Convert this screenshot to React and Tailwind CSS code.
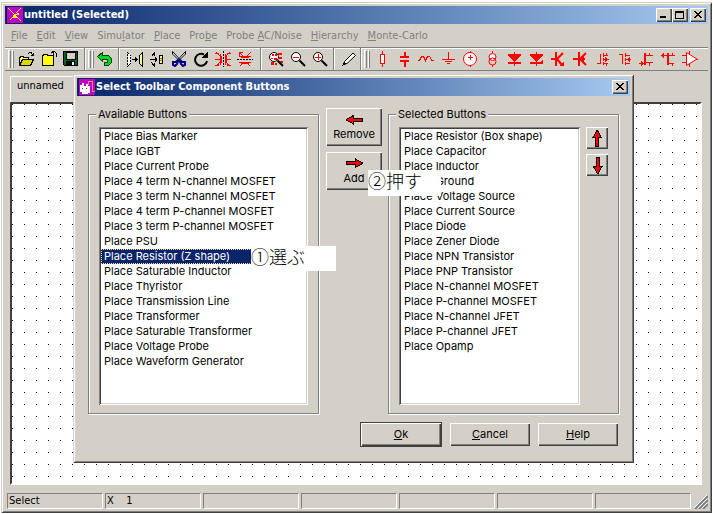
import { clsx } from 'clsx'
import { useState } from 'react'

const raised =
  'bg-[#d4d0c8] shadow-[inset_1px_1px_#ffffff,inset_-1px_-1px_#404040,inset_-2px_-2px_#808080]'
const frame =
  'bg-[#d4d0c8] shadow-[inset_1px_1px_#d4d0c8,inset_-1px_-1px_#404040,inset_2px_2px_#ffffff,inset_-2px_-2px_#808080]'
const titleBar =
  'flex h-[18px] items-center bg-linear-to-r from-[#0a246a] to-[#a6caf0] pr-[2px] text-white'

const menus = [
  ['', 'F', 'ile'],
  ['', 'E', 'dit'],
  ['', 'V', 'iew'],
  ['Simu', 'l', 'ator'],
  ['', 'P', 'lace'],
  ['Pro', 'b', 'e'],
  ['Probe ', 'A', 'C/Noise'],
  ['', 'H', 'ierarchy'],
  ['', 'M', 'onte-Carlo'],
]

const available = [
  'Place Bias Marker',
  'Place IGBT',
  'Place Current Probe',
  'Place 4 term N-channel MOSFET',
  'Place 3 term N-channel MOSFET',
  'Place 4 term P-channel MOSFET',
  'Place 3 term P-channel MOSFET',
  'Place PSU',
  'Place Resistor (Z shape)',
  'Place Saturable Inductor',
  'Place Thyristor',
  'Place Transmission Line',
  'Place Transformer',
  'Place Saturable Transformer',
  'Place Voltage Probe',
  'Place Waveform Generator',
]

const chosen = [
  'Place Resistor (Box shape)',
  'Place Capacitor',
  'Place Inductor',
  'Place Ground',
  'Place Voltage Source',
  'Place Current Source',
  'Place Diode',
  'Place Zener Diode',
  'Place NPN Transistor',
  'Place PNP Transistor',
  'Place N-channel MOSFET',
  'Place P-channel MOSFET',
  'Place N-channel JFET',
  'Place P-channel JFET',
  'Place Opamp',
]

const fileTools = [
  {
    label: 'Open',
    art: (
      <>
        <path d="M0.5 14V6.5H1.5V5.5H4.5V6.5H9.500V8" fill="#ffff80" stroke="#000" />
        <path d="M0.5 14.5L3.5 8.5H14.5L11.5 14.5Z" fill="#d8d800" stroke="#000" />
        <path d="M8.5 3.5L10.5 1.5H12.5L13.5 4.5M11.5 4.5H14.5V2" fill="none" stroke="#000" />
      </>
    ),
  },
  {
    label: 'Close',
    art: (
      <>
        <path d="M1.5 14.5V4.5H2.5V3.5H6.5V4.5H12.5V14.5Z" fill="#ffff00" stroke="#000" />
        <path d="M15.5 5.5V2.5L13.5 0.5H10.5M12.5 0V3.5M10 1.5H12" fill="none" stroke="#000" />
      </>
    ),
  },
  {
    label: 'Save',
    art: (
      <>
        <path d="M0.5 0.5H14.5V14.5H1.5L0.5 13.5Z" fill="#006020" stroke="#000" />
        <path d="M3 1H12V8H3Z" fill="#d4d0c8" stroke="#000" />
        <path d="M3 10H12V14H3Z" fill="#000" />
        <path d="M9 11H11V14H9Z" fill="#fff" />
      </>
    ),
  },
]

const undoTools = [
  {
    label: 'Undo',
    art: (
      <path
        d="M0.5 5.5L5.5 1.5V4.5H11.5L14.5 7.5V11.5L11.5 14.5H7.5V11.5H10.5V8.5H5.5V10.5Z"
        fill="#00d820"
        stroke="#004000"
      />
    ),
  },
]

const editTools = [
  {
    label: 'Mirror',
    art: (
      <>
        <path d="M0.5 1.5L3.5 4.5V12.5L0.5 15.5Z" fill="#fff" stroke="#000" strokeDasharray="2 1" />
        <path d="M15.5 1.5L12.5 4.5V12.5L15.5 15.5Z" fill="#ffff90" stroke="#000" />
        <path d="M5 8.5H11M8.5 6V11M9.5 7V10" stroke="#000" />
      </>
    ),
  },
  {
    label: 'Resize',
    art: (
      <>
        <path d="M2.5 5.5L5.5 1.5V5M2.5 11.5L5.5 15.5V12M1 8.5H8M6.5 6V11M7.5 7V10" fill="none" stroke="#000" />
        <path d="M10.5 4.5H13.5V12.5H10.5Z" fill="#ffff90" stroke="#000" />
        <path d="M11 7.5H13M11 9.5H13" stroke="#808000" />
      </>
    ),
  },
  {
    label: 'Cut',
    art: (
      <>
        <path d="M1.5 0.5V3L8 9.5L14.5 3V0.5L8 7.5Z" fill="#fff" stroke="#000" shapeRendering="auto" />
        <g fill="#d4d0c8" stroke="#000080" strokeWidth="2" shapeRendering="auto">
          <path d="M8 8L5 11H2V14L4 15L6 13ZM8 8L11 11H14V14L12 15L10 13Z" />
        </g>
      </>
    ),
  },
  {
    label: 'Rotate',
    art: (
      <>
        <path d="M11 3.5A6 6 0 1 0 14 10" fill="none" stroke="#000" strokeWidth="2" shapeRendering="auto" />
        <path d="M9 6.5H15V1Z" fill="#000" />
      </>
    ),
  },
  {
    label: 'Flip horizontal',
    art: (
      <>
        <path d="M1.5 1.5L5 5V11L1.5 15.5M5.5 3V14M6 5V12M14.5 1.5L11 5V11L14.5 15.5M10.5 3V14M0 8.5H6M10 8.5H16M0 2.5H4M12 2.5H16M0 14.5H4M12 14.5H16" fill="none" stroke="#ff0000" />
        <path d="M8.5 0V16" stroke="#000" strokeDasharray="2 1" />
      </>
    ),
  },
  {
    label: 'Flip vertical',
    art: (
      <>
        <path d="M2 5.5H14M4 6H12M2.5 1.5L6.5 5.5M2.5 5V1.5H6M13.5 1.5L9.5 5.5M2 11H14M4 12H12M2.5 15.5L6.5 11.5M13.5 15.5L9.5 11.5" fill="none" stroke="#ff0000" />
        <path d="M0 8.5H16" stroke="#000" strokeDasharray="2 1" />
      </>
    ),
  },
]

function Lens({ children }) {
  return (
    <>
      <circle cx="6" cy="6" r="4.5" fill="#fff" stroke="#000" shapeRendering="auto" />
      <path d="M9.5 9.5L15 15" stroke="#000" strokeWidth="2" shapeRendering="auto" />
      {children}
    </>
  )
}

const zoomTools = [
  {
    label: 'Zoom box',
    art: (
      <>
        <path d="M10 2H14V4H10ZM11 6H14V8H11ZM12 10H15V12H12ZM3 11H6V14H3ZM7 12H9V14H7Z" fill="#ff0000" />
        <Lens>
          <path d="M4 3H6V5H4ZM7 3H9V5H7ZM3 7H5V8H3ZM6 7H9V9H6Z" fill="#ff0000" />
        </Lens>
      </>
    ),
  },
  { label: 'Zoom out', art: <Lens><path d="M3 6.5H9" stroke="#ff0000" /></Lens> },
  { label: 'Zoom in', art: <Lens><path d="M3 6.5H9M6.5 3V9" stroke="#ff0000" /></Lens> },
]

const drawTools = [
  {
    label: 'Wire',
    art: (
      <>
        <path d="M2.5 13.5L3.5 10.5L12 2L14.5 4.5L6 12.5Z" fill="#fff" stroke="#000" shapeRendering="auto" />
        <path d="M1 15L3 11L5 13Z" fill="#000" />
      </>
    ),
  },
]

// schematic symbols, all drawn with the same red pen
const partTools = [
  { label: 'Resistor', art: <path d="M8.5 0V4M8.5 13V16M6.5 3.5H10.5V12.5H6.5Z" fill="#fff" /> },
  { label: 'Capacitor', art: <path d="M8.5 1V6M8.5 10V16M4 6H13M4 10H13" strokeWidth="2" /> },
  { label: 'Inductor', art: <path d="M0 9.5H1.5L3.5 5.5L5.5 5.5L7.5 9.5L9.5 5.5H11.5L14 9.5H16" /> },
  { label: 'Ground', art: <path d="M8.5 1V8M2 8.5H15M5 10.5H12M7 12.5H10" /> },
  {
    label: 'Voltage source',
    art: (
      <>
        <circle cx="8" cy="8" r="6.5" fill="#fff" shapeRendering="auto" />
        <path d="M8.5 0V2M8.5 14V16M6 6.5H11M8.5 4V9" />
      </>
    ),
  },
  {
    label: 'Current source',
    art: (
      <>
        <path d="M8.5 0V2M8.5 14V16" />
        <circle cx="8.5" cy="6" r="3.5" fill="#fff" shapeRendering="auto" />
        <circle cx="8.5" cy="10.5" r="3.5" shapeRendering="auto" />
      </>
    ),
  },
  {
    label: 'Diode',
    art: (
      <>
        <path d="M2 4H15L8.5 11Z" fill="#ff0000" stroke="none" />
        <path d="M8.5 1V15M2 3.5H15" />
        <path d="M2 12H15" strokeWidth="2" />
      </>
    ),
  },
  {
    label: 'Zener diode',
    art: (
      <>
        <path d="M2 4H15L8.5 11Z" fill="#ff0000" stroke="none" />
        <path d="M8.5 1V15M2 3.5H15M14.5 9V12M13.5 10V12" />
        <path d="M2 12H15" strokeWidth="2" />
      </>
    ),
  },
  {
    label: 'NPN transistor',
    art: (
      <>
        <path d="M6 1V15M1 8H6" strokeWidth="2" />
        <path d="M7 8L13 2M7 8L12 14" strokeWidth="2" shapeRendering="auto" />
        <path d="M9 15H14V10Z" fill="#ff0000" stroke="none" />
      </>
    ),
  },
  {
    label: 'PNP transistor',
    art: (
      <>
        <path d="M7 1V15M1 8H13" strokeWidth="2" />
        <path d="M8 8L14 2M8 8L14 14" strokeWidth="2" shapeRendering="auto" />
        <path d="M8 8L12 5V11Z" fill="#ff0000" stroke="none" />
      </>
    ),
  },
  {
    label: 'N-channel MOSFET',
    art: <path d="M3 12.5H6.5V3M9.5 2V6M9.5 7V10M9.5 11V14M9 4.5H14M9 12.5H14M9 8.5H15M11.5 6V11M12.5 7V10M12.5 2V5M12.5 12V15" />,
  },
  {
    label: 'P-channel MOSFET',
    art: <path d="M3 3.5H6.5V13M9.5 2V6M9.5 7V10M9.5 11V14M9 4.5H14M9 12.5H14M9 8.5H15M13.5 6V11M12.5 7V10" />,
  },
  {
    label: 'N-channel JFET',
    art: (
      <>
        <path d="M7 2V14" strokeWidth="2" />
        <path d="M1 12.5H7M3.5 10V15M4.5 11V14M7 4.5H15M7 11.5H15M11.5 2V4M11.5 12V15" />
      </>
    ),
  },
  {
    label: 'P-channel JFET',
    art: (
      <>
        <path d="M8 2V14" strokeWidth="2" />
        <path d="M1 4.5H15M3.5 2V7M2.5 3V6M7 12.5H14M12.5 2V4M12.5 12V15" />
      </>
    ),
  },
  {
    label: 'Opamp',
    art: (
      <>
        <path d="M4.5 1.5V14.5L15 8Z" fill="#fff" shapeRendering="auto" />
        <path d="M0 4.5H4M0 11.5H4M7.5 0V3M7.5 13V16M14 8.5H16" />
      </>
    ),
  },
]

function ToolGroup({ tools, red }) {
  return (
    <div className="flex shrink-0 items-center">
      {tools.map((tool) => (
        <button
          key={tool.label}
          type="button"
          aria-label={tool.label}
          className="flex h-[22px] w-[22px] items-center justify-center"
        >
          <svg
            width="16"
            height="16"
            viewBox="0 0 16 16"
            fill="none"
            stroke={red ? '#ff0000' : undefined}
            shapeRendering="crispEdges"
          >
            {tool.art}
          </svg>
        </button>
      ))}
    </div>
  )
}

function Grip() {
  return (
    <div className="flex h-[18px] w-[6px] shrink-0 gap-px">
      <span className="flex-1 border-t border-r border-l border-white border-r-[#808080]" />
      <span className="flex-1 border-t border-r border-l border-white border-r-[#808080]" />
    </div>
  )
}

function Divider({ className }) {
  return (
    <div
      className={clsx('w-[2px] shrink-0 self-stretch border-r border-l border-[#808080] border-r-white', className)}
    />
  )
}

function CaptionButton({ label, children }) {
  return (
    <button type="button" aria-label={label} className={clsx('flex h-[14px] w-4 items-center justify-center', raised)}>
      <svg width="10" height="8" viewBox="0 0 10 8" fill="none" stroke="#000" shapeRendering="crispEdges">
        {children}
      </svg>
    </button>
  )
}

function CloseGlyph() {
  return (
    <path
      d="M1 0H3V1H4V2H6V1H7V0H9V1H8V2H7V3H6V4H7V5H8V6H9V7H7V6H6V5H4V6H3V7H1V6H2V5H3V4H4V3H3V2H2V1H1Z"
      fill="#000"
      stroke="none"
    />
  )
}

function ArrowIcon({ className }) {
  return (
    <svg width="17" height="11" viewBox="0 0 17 11" className={className} shapeRendering="crispEdges">
      <path d="M0.5 5.5L7.5 1.5V4.5H16.5V7.5H7.5V10L0.5 6Z" fill="#ff0000" stroke="#000" />
    </svg>
  )
}

function ListBox({ label, items, value, onChange }) {
  return (
    <select
      multiple
      size={items.length}
      aria-label={label}
      value={value}
      onChange={(e) => onChange([e.target.value])}
      className="h-[278px] min-w-0 flex-1 appearance-none overflow-hidden rounded-none bg-white p-[2px] text-[11px] text-black shadow-[inset_1px_1px_#808080,inset_-1px_-1px_#ffffff,inset_2px_2px_#404040,inset_-2px_-2px_#d4d0c8] outline-none"
    >
      {items.map((item) => (
        <option
          key={item}
          value={item}
          className="h-[15px] min-h-0 p-0 pl-[3px] leading-[15px] checked:bg-[#0a246a] checked:bg-linear-to-r checked:from-[#0a246a] checked:to-[#0a246a] checked:text-white checked:outline-1 checked:-outline-offset-1 checked:outline-dotted checked:outline-[#f5db95]"
        >
          {item}
        </option>
      ))}
    </select>
  )
}

function ButtonGroup({ title, children }) {
  return (
    <fieldset className="min-w-0 flex-1 border border-[#808080] px-[10px] pb-2 shadow-[1px_1px_#ffffff,inset_1px_1px_#ffffff]">
      <legend className="-ml-[3px] bg-[#d4d0c8] px-[2px] leading-[14px]">{title}</legend>
      <div className="flex gap-[6px] pt-[6px]">{children}</div>
    </fieldset>
  )
}

function SelectButtonsDialog() {
  const [left, setLeft] = useState(['Place Resistor (Z shape)'])
  const [right, setRight] = useState([])

  return (
    <div
      role="dialog"
      aria-label="Select Toolbar Component Buttons"
      className={clsx(
        'absolute top-[72px] left-[72px] w-[561px] p-1 font-[Inter,"Noto_Sans_CJK_JP",sans-serif] text-[11px]',
        frame,
      )}
    >
      <div className={titleBar}>
        <svg width="16" height="16" viewBox="0 0 16 16" className="mr-px ml-[2px]" shapeRendering="crispEdges">
          <path d="M0 0H16V16H0Z" fill="#c000c0" />
          <path d="M1 6H3V4H5V7H7V5H9V7H11V14H9V15H3V13H1Z" fill="#fff" />
          <path d="M9 2.5H13.5V12M9.5 2V6M13 12.5H16" fill="none" stroke="#ff8080" />
          <path d="M3 9H4V10H3ZM7 9H8V10H7Z" fill="#c000c0" />
        </svg>
        <span className='flex-1 font-["DejaVu_Sans_Condensed","DejaVu_Sans",sans-serif] font-bold'>
          Select Toolbar Component Buttons
        </span>
        <CaptionButton label="Close"><CloseGlyph /></CaptionButton>
      </div>

      <div className="px-[11px] pt-[11px] pb-3">
        <div className="flex">
          <ButtonGroup title="Available Buttons">
            <ListBox label="Available Buttons" items={available} value={left} onChange={setLeft} />
          </ButtonGroup>
          <div className="mr-[6px] ml-[7px] flex w-14 flex-col gap-[6px] pt-px">
            <button type="button" className={clsx('flex h-[38px] flex-col items-center pt-[6px]', raised)}>
              <ArrowIcon />
              <span className="leading-[18px]">Remove</span>
            </button>
            <button type="button" className={clsx('flex h-[38px] flex-col items-center pt-[6px]', raised)}>
              <ArrowIcon className="rotate-180" />
              <span className="leading-[18px]">Add</span>
            </button>
          </div>
          <ButtonGroup title="Selected Buttons">
            <ListBox label="Selected Buttons" items={chosen} value={right} onChange={setRight} />
            <div className="flex w-[22px] flex-col gap-[5px]">
              <button
                type="button"
                aria-label="Move up"
                className={clsx('flex h-[22px] items-center justify-center', raised)}
              >
                <ArrowIcon className="shrink-0 rotate-90" />
              </button>
              <button
                type="button"
                aria-label="Move down"
                className={clsx('flex h-[22px] items-center justify-center', raised)}
              >
                <ArrowIcon className="shrink-0 -rotate-90" />
              </button>
            </div>
          </ButtonGroup>
        </div>

        <div className="mt-2 flex items-center justify-end gap-2 pr-px">
          <button type="button" className="bg-[#404040] p-px">
            <span className={clsx('flex h-[23px] w-20 items-center justify-center', raised)}>
              <u>O</u>k
            </span>
          </button>
          <button type="button" className={clsx('h-[23px] w-20', raised)}><u>C</u>ancel</button>
          <button type="button" className={clsx('h-[23px] w-20', raised)}><u>H</u>elp</button>
        </div>
      </div>
    </div>
  )
}

function Note({ className, children }) {
  return (
    <p
      className={clsx(
        'pointer-events-none absolute bg-white font-["Noto_Sans_CJK_JP",sans-serif] text-lg leading-5 font-light text-black',
        className,
      )}
    >
      {children}
    </p>
  )
}

export default function App() {
  return (
    <div className='flex min-h-screen bg-white px-px pt-[2px] pb-px font-["DejaVu_Sans_Condensed","DejaVu_Sans",sans-serif] text-[11px] text-black'>
      <div className={clsx('relative flex min-w-0 flex-1 flex-col p-1', frame)}>
        <div className={titleBar}>
          <svg width="16" height="16" viewBox="0 0 16 16" className="mr-px ml-[2px]" shapeRendering="crispEdges">
            <path d="M0 0H16V16H0Z" fill="#c000c0" />
            <path d="M1 1L14 14M14 1L9 6" stroke="#ffe080" />
            <path d="M7 7L12 6V8H9L11 11H6L3 13L6 9Z" fill="#ffff00" />
          </svg>
          <h1 className="flex-1 font-bold">untitled (Selected)</h1>
          <CaptionButton label="Minimize"><path d="M1 6H7" strokeWidth="2" /></CaptionButton>
          <CaptionButton label="Maximize">
            <path d="M0.5 0.5H8.5V7.5H0.5ZM1 1.5H8" />
          </CaptionButton>
          <span className="w-[2px]" />
          <CaptionButton label="Close"><CloseGlyph /></CaptionButton>
        </div>

        <nav className="flex h-[23px] items-center gap-[9px] pt-px pl-[6px] text-[#808080]">
          {menus.map(([before, key, after]) => (
            <button key={before + key} type="button" className="shrink-0 whitespace-pre">
              {before}<u>{key}</u>{after}
            </button>
          ))}
        </nav>

        <div className="flex h-6 items-center overflow-hidden border-y border-[#808080] pl-[3px] shadow-[inset_0_1px_#ffffff]">
          <Grip />
          <span className="w-[2px]" />
          <ToolGroup tools={fileTools} />
          <Divider className="mx-[2px]" />
          <Grip />
          <ToolGroup tools={undoTools} />
          <Divider className="mr-1 ml-[2px]" />
          <ToolGroup tools={editTools} />
          <Divider className="mr-[3px] ml-1" />
          <ToolGroup tools={zoomTools} />
          <Divider className="mr-[3px] ml-[2px]" />
          <ToolGroup tools={drawTools} />
          <Divider className="mr-[2px]" />
          <Grip />
          <span className="w-px" />
          <ToolGroup tools={partTools} red />
        </div>

        <div className="mt-[5px] flex pl-[5px]">
          <div className="flex h-[26px] w-[84px] items-center border-t border-l border-white pb-[6px] pl-[6px]">
            unnamed
          </div>
        </div>

        <div className="mr-[6px] ml-[5px] flex flex-1 border-2 border-[#404040] border-r-white border-b-white bg-white">
          <svg width="100%" height="100%" className="block h-auto min-h-0 flex-1" shapeRendering="crispEdges">
            <pattern id="grid" width="12" height="12" patternUnits="userSpaceOnUse">
              <path d="M0 0H1V1H0Z" />
            </pattern>
            <rect width="100%" height="100%" fill="url(#grid)" />
          </svg>
        </div>

        <footer className="mt-2 flex items-stretch pl-[2px]">
          <div className="flex flex-1 gap-[2px]">
            {['Select', 'X    1', '', '', '', '', ''].map((text, i) => (
              <div
                key={i}
                className="h-4 min-w-0 flex-1 border border-[#808080] border-r-white border-b-white px-px leading-[14px] whitespace-pre"
              >
                {text}
              </div>
            ))}
          </div>
          <svg width="17" height="16" viewBox="0 0 17 16" className="shrink-0">
            <path d="M4 16L17 3M8 16L17 7M12 16L17 11" stroke="#808080" strokeWidth="2" />
            <path d="M3 15L16 2M7 15L16 6M11 15L16 10" stroke="#fff" />
          </svg>
        </footer>

        <SelectButtonsDialog />
        <Note className="top-[244px] left-[250px] h-[25px] w-[85px]">①選ぶ</Note>
        <Note className="top-[168px] left-[367px] h-[26px] w-[73px]">②押す</Note>
      </div>
    </div>
  )
}
